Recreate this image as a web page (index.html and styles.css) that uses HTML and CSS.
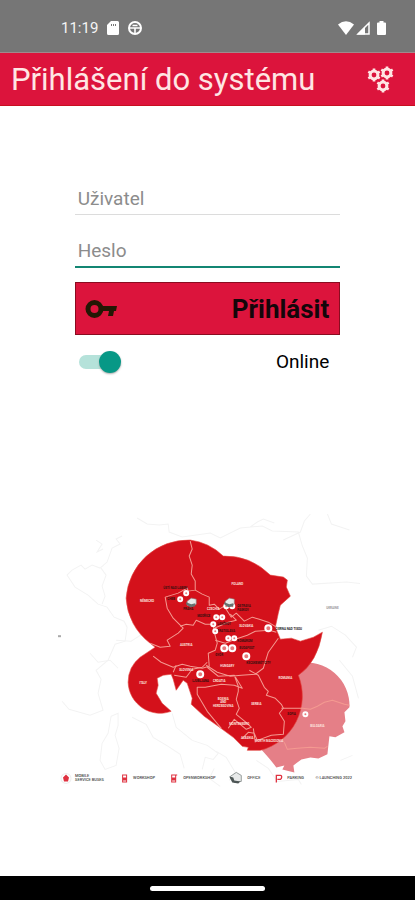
FILE: index.html
```html
<!DOCTYPE html>
<html lang="cs">
  <head>
    <meta charset="UTF-8">
    <meta name="viewport" content="width=device-width, initial-scale=1.0"/>
    <title>Přihlášení do systému</title>
    <link rel="stylesheet" href="styles.css">
  </head>
  <body>
    <div class="status-bar">
      <div class="status-left">
        <span class="clock">11:19</span>
        <svg width="12" height="14" viewBox="0 0 12 14"><path fill="#fff" fill-rule="evenodd" d="M4 0h6.500q1.500 0 1.500 1.500v11q0 1.500-1.500 1.500h-9Q0 14 0 12.500V4zM4 3v2h1V3zM6 3v2h1V3zM8 3v2h1V3z"/></svg>
        <svg width="14" height="14" viewBox="0 0 14 14" fill="none" stroke="#fff"><circle cx="7" cy="7" r="6" stroke-width="2"/><path d="M1 7h12M4.500 4.500h5M7 7v5" stroke-width="1.600"/></svg>
      </div>
      <div class="status-right">
        <svg width="16" height="14" viewBox="0 0 16 14"><path fill="#fff" d="M0 3.500Q8-3 16 3.500L8 14z"/></svg>
        <svg width="14" height="14" viewBox="0 0 14 14"><path fill="none" stroke="#fff" stroke-width="1.500" d="M2 13L13 2v11z"/><path fill="#fff" d="M1 13.500L9 5.500v8z"/></svg>
        <svg width="9" height="14" viewBox="0 0 9 14"><path fill="#fff" d="M2.500 0h4v1.500H8q1 0 1 1V13q0 1-1 1H1q-1 0-1-1V2.500q0-1 1-1h1.500z"/></svg>
      </div>
    </div>

    <header class="app-bar">
      <h1>Přihlášení do systému</h1>
      <button type="button" class="settings" aria-label="Nastavení">
        <svg width="28" height="28" viewBox="0 0 28 28">
          <defs>
            <g id="gear">
              <circle r="3.900" fill="none" stroke="#ffe6e4" stroke-width="3"/>
              <path d="M0-6.600V-4M0 6.600V4M-5.700-3.300L-3.500-2M5.700 3.300L3.500 2M-5.700 3.300L-3.500 2M5.700-3.300L3.500-2" stroke="#ffe6e4" stroke-width="2.600"/>
            </g>
          </defs>
          <use href="#gear" x="7" y="10"/>
          <use href="#gear" x="20" y="8"/>
          <use href="#gear" x="16" y="21"/>
        </svg>
      </button>
    </header>

    <main>
      <form class="login" action="">
        <input type="text" id="user" name="user" placeholder="Uživatel" aria-label="Uživatel">
        <input type="password" id="password" name="password" class="active" placeholder="Heslo" aria-label="Heslo">
        <button type="submit" class="submit">
          <svg width="33" height="20" viewBox="0 0 33 20"><path fill="none" stroke="#241804" stroke-width="5" d="M17 10a6.500 6.500 0 1 1-13 0a6.500 6.500 0 1 1 13 0z"/><path fill="#241804" d="M18 7h15l-1 5h-2l-1 5h-5l1-5h-7z"/></svg>
          <span>Přihlásit</span>
        </button>
        <div class="online">
          <input type="checkbox" id="online" checked>
          <label for="online">Online</label>
        </div>
      </form>

      <svg class="map" viewBox="55 510 305 285" role="img" aria-label="Mapa servisů">
        <!-- faint borders and coasts -->
        <g fill="none" stroke="#f3f3f3" stroke-width="1">
          <path d="M137 518l10 6l12 1l9-1l1 8l13 5l28-4l10 5l20-10l22-2l10 5l26 1l4 14l5 12l-1 18l6 8l34-2l20 2l10-3l9 1M283 540l17-8l4-11l6-7M250 527l7-5l6-3l11 4M327 514l4 10l18 6"/>
          <path d="M122 536l-6 3l4 5l-8 4l-5 14l-7 6l-8-3l-7 4l-4-4l-9 5l-5 5l8 12l13 8l10 9l9 3l7 10l10 4l3 6l-2 14l-10 3l-7 16l-12 10l5 9l-3 14l5 17l-13 5l-21-6l-7-8"/>
          <path d="M96 540l6 4l-5 8l6-3M101 568l5 7l-4 11l3 10l-3 8M116 640l15 1l11-7M90 653l8 9l12-2l8 8"/>
          <path d="M111 716l7-3v12l-3 10l4 13l-3 17l-11 4l-5-9l2-17l6-10zM132 717l14 7l7 13l15 9l12 8l4 14M172 713l4 14l16 13l15 5l11 8l-5 6l-8-2l-3 12"/>
          <path d="M216 751l10 6l9 15l-6 8M256 760l12 8l9 13l21-2l3 5M318 630l13-4l14 9l11 12l-4 10M339 660l13 16l6 22M340 760l12-5M214 768l-5 10l11 8"/>
        </g>

        <path fill="#e57f87" d="M298 663A43 43 0 0 1 349 707l-5 5l1 9l-3 5l2 6l-9 5l-6-1l-1 9l-1 9l-9 4l-8-1l-9 2l-8 6l1 7l-12-3l2-4l-8 2Q270 759 258 746z"/>
        <path fill="#d4111b" stroke="#e34a43" stroke-width=".6" d="M190 540A62 62 0 0 0 126 598A60 60 0 0 0 150 643l5 4l-15 10A32 32 0 0 0 128 682A32 32 0 0 0 171 711l-9-8l-6-10l2-8l-1-7l6-3l8-1l2 5l3 11l7-10l4 3l3 9l2 6l-1 6l13 12l14 10l15 11l9 9l6 1l-1 3H260A56 56 0 0 0 298 675Q317 662 322 632L313 637L300 641L291 638L280 639L275 627L278 613L280 605L290 596L286 587L287 580L283 577L270 575A64 64 0 0 0 223 556A58 58 0 0 0 190 540z"/>

        <!-- state borders -->
        <g fill="none" stroke="#f49a91" stroke-width="1" stroke-linejoin="round">
          <path d="M190 541l2 8l-3 7l3 9l-1 9l4 7v9l-7 1l-1-3l-9 5l-13 4l2 11l6 10l10 10l-5 5l-11 7l3 6l-10 1l-10-4"/>
          <path d="M195 590l7 4l7 3v8l5-1l5 5l5-3l7 11l5-4l8 8l8-4l7 2l9 3l8 5"/>
          <path d="M180 626l6-2l7 1l3-5l9 4h8l1 8l3 11l-2 7l-7 3l1 13l-7 2l-12-2l-8-2l-9 3l-12-5l-8-6"/>
          <path d="M230 614l6 6l-8 2l-14 6M215 640l10 3l10-4l12-4l8-4l14-1l7 2M278 638l-10 14l-5 16l-8 6l-14 1l-11 1l-13-4l-11-7M173 672l3-7M174 675l12 2l6-8l10-2l5-5M207 667l11 9l16-1l8 13l-8-3l-13-1l-16 3l-8 0v7l10 17l14 17M234 675l4 11v5l-2 8l3 9l-3 6l11 9l4 4l-5 2l-12-10l-6 9M249 670l9 5l6 12l4 4l-2 4l9 3l6 6l2 4l-4 5l5 8l-1 13l-12 1l-14 5l-3-7l-6-1l-6 6M255 742l-2-14"/>
          <path d="M281 708l21 0l8 1l7-3l7-4l8-2l12 4l5 1M284 742l3 7l10-1l13-1l14 1l3-2"/>
        </g>

        <g fill="#fde3df" class="countries">
          <text x="147" y="602">NĚMECKO</text>
          <text x="237" y="585">POLAND</text>
          <text x="213" y="610">CZECHIA</text>
          <text x="186" y="646">AUSTRIA</text>
          <text x="246" y="627">SLOVAKIA</text>
          <text x="227" y="667">HUNGARY</text>
          <text x="186" y="671">SLOVENIA</text>
          <text x="219" y="682">CROATIA</text>
          <text x="143" y="684">ITALY</text>
          <text x="223" y="700">BOSNIA</text>
          <text x="223" y="703">AND</text>
          <text x="223" y="707">HERZEGOVINA</text>
          <text x="256" y="705">SERBIA</text>
          <text x="285" y="679">ROMANIA</text>
          <text x="239" y="725">MONTENEGRO</text>
          <text x="247" y="739">ALBANIA</text>
          <text x="269" y="742">NORTH MACEDONIA</text>
          <text x="317" y="727">BULGARIA</text>
          <text x="332" y="609" fill="#999">UKRAINE</text>
        </g>

        <g fill="#35100f" class="cities">
          <text x="163" y="589">ÚSTÍ NAD LABEM</text>
          <text x="167" y="600">CHEB</text>
          <text x="183" y="610">PRAHA</text>
          <text x="237" y="607">OSTRAVA</text>
          <text x="237" y="611">PASKOV</text>
          <text x="197" y="617">MODŘICE</text>
          <text x="217" y="625">LANŽHOT</text>
          <text x="217" y="632">BRATISLAVA</text>
          <text x="237" y="642">KOMÁROM</text>
          <text x="239" y="649">BUDAPEST</text>
          <text x="215" y="656">GYŐR</text>
          <text x="246" y="664">KECSKEMÉT CITY</text>
          <text x="192" y="682">LJUBLJANA</text>
          <text x="287" y="715">SOFIA</text>
          <text x="275" y="630" fill="#222">ČIERNA NAD TISOU</text>
        </g>

        <g fill="#e8797b" stroke="#fff" stroke-width="2">
          <circle cx="186" cy="593" r="2"/>
          <circle cx="180" cy="599" r="2"/>
          <circle cx="226" cy="606" r="2"/>
          <circle cx="232" cy="606" r="2"/>
          <circle cx="216" cy="617" r="2"/>
          <circle cx="222" cy="617" r="2"/>
          <circle cx="213" cy="624" r="2"/>
          <circle cx="215" cy="631" r="2"/>
          <circle cx="228" cy="638" r="2"/>
          <circle cx="234" cy="638" r="2"/>
          <circle cx="224" cy="648" r="3"/>
          <circle cx="232" cy="648" r="3"/>
          <circle cx="246" cy="656" r="3"/>
          <circle cx="268" cy="628" r="3"/>
          <circle cx="200" cy="674" r="3"/>
          <circle cx="305" cy="714" r="2"/>
        </g>
        <g id="office">
          <path fill="#e7e9e9" stroke="#888" stroke-width=".6" d="M187 601l4-3l5 1v5l-4 2l-5-1z"/>
          <path fill="#65706f" d="M186 602l5 2l4-1v3l-5 1l-4-3z"/>
        </g>
        <use href="#office" x="38"/>

        <!-- legend -->
        <g class="legend">
          <circle cx="66" cy="778" r="5" fill="#fff" stroke="#eee"/>
          <path fill="#df3240" d="M63 777l3-3l3 3l-1 4h-4z"/>
          <text x="75" y="777">MOBILE</text>
          <text x="75" y="781">SERVICE BUSES</text>
          <path fill="#df3240" fill-rule="evenodd" d="M122 774h5v8h-5zM123 775v2h3v-2zM123 780v1h3v-1z"/>
          <text x="133" y="779">WORKSHOP</text>
          <path fill="#df3240" fill-rule="evenodd" d="M171 774h6v1h-1v7h-5zM172 775v2h3v-2zM172 780v1h3v-1z"/>
          <text x="183" y="779">OPENWORKSHOP</text>
          <path fill="#e8eaea" stroke="#6e7776" stroke-width=".7" d="M230 776l6-4l5 3v6l-7 1l-3-3z"/>
          <path fill="#4d5655" d="M229 776l4 1l1 3l6 1l-2 2l-6-1z"/>
          <text x="247" y="779">OFFICE</text>
          <path fill="none" stroke="#df3240" stroke-width="1.300" d="M276 782v-7h4q2 0 1 3l-1 1h-3"/>
          <text x="287" y="779">PARKING</text>
          <text x="315" y="779">© LAUNCHING 2022</text>
        </g>
        <path stroke="#aaa" stroke-width="2" d="M58 636h3"/>
      </svg>
    </main>

    <footer class="nav-bar"><span class="nav-handle"></span></footer>
  </body>
</html>
```
FILE: styles.css
```css
*
{
  box-sizing: border-box;
}

body
{
  display: flex;
  flex-direction: column;
  min-height: 100vh;
  margin: 0;
  background: #fff;
  font-family: Roboto, sans-serif;
}

svg
{
  display: block;
}

.status-bar
{
  display: flex;
  justify-content: space-between;
  height: 53px;
  padding: 4px 29px 0 61px;
  border-bottom: 1px solid #a2898c;
  background: #767676;
}

.status-left,
.status-right
{
  display: flex;
  align-items: center;
}

.status-left
{
  gap: 9px;
}

.status-right
{
  gap: 2px;
}

.status-right svg:last-child
{
  margin-left: 5px;
}

.clock
{
  color: #f4f4f4;
  font-size: 15px;
}

.app-bar
{
  display: flex;
  align-items: center;
  justify-content: space-between;
  height: 53px;
  padding: 0 20px 0 11px;
  border-bottom: 1px solid #c80f20;
  background: #dc143c;
}

h1
{
  margin: 0;
  color: #ffe6e4;
  font-size: 31px;
  font-weight: 400;
  white-space: nowrap;
}

button
{
  padding: 0;
  border: 0;
  background: none;
  font-family: inherit;
}

main
{
  display: flex;
  flex: 1;
  flex-direction: column;
  padding: 77px 18% 0;
}

.login
{
  display: flex;
  flex-direction: column;
}

input[type="text"],
input[type="password"]
{
  width: 100%;
  height: 32px;
  margin-bottom: 20px;
  padding: 0 3px;
  border: 0;
  border-bottom: 1px solid #dcdcdc;
  outline: 0;
  background: none;
  font-family: inherit;
  font-size: 19px;
}

input[type="password"].active
{
  height: 33px;
  margin-bottom: 14px;
  border-bottom: 2px solid #138673;
}

input::placeholder
{
  color: #8c8c8c;
  opacity: 1;
}

.submit
{
  display: flex;
  align-items: center;
  justify-content: space-between;
  height: 53px;
  padding: 0 10px 0 8px;
  border: 1px solid #8a0c20;
  background: #dc143c;
  color: #14060a;
  font-size: 26px;
  font-weight: 700;
}

.settings svg
{
  width: 28px;
  height: 28px;
}

.online
{
  display: flex;
  align-items: center;
  justify-content: space-between;
  margin-top: 15px;
  padding: 0 11px 0 4px;
  font-size: 19px;
}

.online input
{
  position: relative;
  width: 41px;
  height: 14px;
  margin: 0;
  border-radius: 7px;
  background: #b5e2da;
  appearance: none;
}

.online input::before
{
  content: "";
  position: absolute;
  top: -4px;
  right: -1px;
  width: 22px;
  height: 22px;
  border-radius: 50%;
  background: #079886;
  box-shadow: 0 1px 2px #aaa;
}

.map
{
  width: 115%;
  margin: 137px 0 0 -20px;
}

text
{
  font-family: Roboto, sans-serif;
}

.countries
{
  font-size: 3px;
  font-weight: 700;
  text-anchor: middle;
}

.cities
{
  font-size: 3px;
  font-weight: 700;
}

.legend
{
  fill: #444;
  font-size: 4px;
  font-weight: 500;
}

.nav-bar
{
  display: flex;
  align-items: center;
  justify-content: center;
  height: 24px;
  background: #000;
}

.nav-handle
{
  width: 115px;
  height: 5px;
  border-radius: 3px;
  background: #fff;
}
```
